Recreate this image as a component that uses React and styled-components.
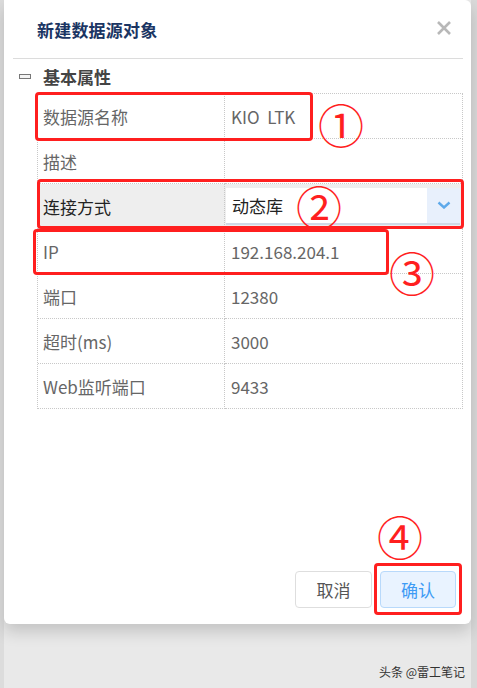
import styled, { createGlobalStyle } from "styled-components";

const GlobalStyle = createGlobalStyle`
  html, body {
    margin: 0;
    padding: 0;
    background: #e8e8e8;
  }
  * {
    box-sizing: border-box;
  }
`;

const Page = styled.div`
  position: relative;
  width: 477px;
  height: 688px;
  overflow: hidden;
  background: linear-gradient(to right, #dcdcdc 0, #dcdcdc 4px, #e9e9e9 4px, #e9e9e9 471px, #d9d9d9 471px);
  font-family: "Noto Sans CJK SC", "Noto Sans", sans-serif;
`;

const Dialog = styled.div`
  margin-left: 4px;
  width: 467px;
  height: 624px;
  background: #fff;
  border-radius: 0 6px 6px 6px;
  box-shadow: 0 8px 16px rgba(0, 0, 0, 0.16);
  display: flex;
  flex-direction: column;
`;

const Header = styled.div`
  height: 59px;
  margin: 0 8px 0 9px;
  padding: 0 11px 0 24px;
  border-bottom: 1px solid #dcdcdc;
  display: flex;
  align-items: center;
  justify-content: space-between;
`;

const Title = styled.h2`
  margin: 0;
  font-size: 17px;
  font-weight: 700;
  color: #1b3563;
  letter-spacing: 0.2px;
`;

const Close = styled.svg`
  width: 16px;
  height: 16px;
  margin-top: -2px;
`;

const Section = styled.div`
  height: 34px;
  padding-left: 15px;
  display: flex;
  align-items: center;
  gap: 12px;
`;

const Collapse = styled.span`
  width: 12px;
  height: 5px;
  border: 1px solid #777;
  background: #f4f4f4;
`;

const SectionTitle = styled.span`
  font-size: 17px;
  font-weight: 700;
  color: #444;
`;

const Table = styled.div`
  margin-left: 33px;
  width: 426px;
  border-top: 1px dotted #c8c8c8;
  border-left: 1px dotted #c8c8c8;
`;

const Row = styled.div`
  display: grid;
  grid-template-columns: 187px 1fr;
  height: 45px;
  background: ${(p) => (p.$active ? "#eeeeee" : "#fff")};
`;

const Cell = styled.div`
  border-right: 1px dotted #c8c8c8;
  border-bottom: 1px dotted #c8c8c8;
  display: flex;
  align-items: center;
  padding-left: ${(p) => (p.$value ? "6px" : "5px")};
  font-size: 17px;
  white-space: pre;
  color: ${(p) => (p.$dark ? "#222" : "#666")};
`;

const Select = styled.div`
  flex: 1;
  height: 37px;
  margin: 0 2px 0 -5px;
  display: flex;
  border-bottom: 2px solid #cfd9e6;
  background: #fff;
`;

const SelectText = styled.div`
  flex: 1;
  display: flex;
  align-items: center;
  padding-left: 6px;
  font-size: 17px;
  color: #222;
`;

const SelectButton = styled.div`
  width: 33px;
  background: #e8f0fc;
  display: flex;
  align-items: center;
  justify-content: center;
`;

const Footer = styled.div`
  margin-top: auto;
  padding: 0 15px 16px 0;
  display: flex;
  justify-content: flex-end;
  gap: 8px;
`;

const Button = styled.button`
  width: ${(p) => (p.$primary ? "76px" : "77px")};
  height: 37px;
  border-radius: 4px;
  border: 1px solid ${(p) => (p.$primary ? "#b8d9fb" : "#dedede")};
  background: ${(p) => (p.$primary ? "#e9f3ff" : "#fff")};
  color: ${(p) => (p.$primary ? "#3d9bf5" : "#555")};
  font-family: inherit;
  font-size: 17px;
  padding: 0;
`;

const Mark = styled.div`
  position: absolute;
  border: 3px solid #ff1f1f;
  border-radius: 4px;
  pointer-events: none;
`;

const Num = styled.div`
  position: absolute;
  color: #ff1f1f;
  font-family: "Noto Sans CJK SC", sans-serif;
  font-size: 46px;
  line-height: 46px;
`;

const Watermark = styled.div`
  position: absolute;
  right: 12px;
  bottom: 8px;
  font-size: 12px;
  color: #333;
`;

const rows = [
  ["数据源名称", "KIO  LTK"],
  ["描述", ""],
  ["连接方式", null],
  ["IP", "192.168.204.1"],
  ["端口", "12380"],
  ["超时(ms)", "3000"],
  ["Web监听端口", "9433"],
];

export default function App() {
  return (
    <Page>
      <GlobalStyle />
      <Dialog>
        <Header>
          <Title>新建数据源对象</Title>
          <Close viewBox="0 0 16 16">
            <path d="M2 2 L14 14 M14 2 L2 14" stroke="#b8b8b8" strokeWidth="2.6" />
          </Close>
        </Header>
        <Section>
          <Collapse />
          <SectionTitle>基本属性</SectionTitle>
        </Section>
        <Table>
          {rows.map(([label, value]) => (
            <Row key={label} $active={value === null}>
              <Cell $dark={value === null}>{label}</Cell>
              {value === null ? (
                <Cell $value>
                  <Select>
                    <SelectText>动态库</SelectText>
                    <SelectButton>
                      <svg width="14" height="8" viewBox="0 0 14 8">
                        <path d="M1.5 1.5 L7 6.5 L12.5 1.5" fill="none" stroke="#5ea9ea" strokeWidth="2.4" />
                      </svg>
                    </SelectButton>
                  </Select>
                </Cell>
              ) : (
                <Cell $value>{value}</Cell>
              )}
            </Row>
          ))}
        </Table>
        <Footer>
          <Button>取消</Button>
          <Button $primary>确认</Button>
        </Footer>
      </Dialog>

      <Mark style={{ left: 35, top: 92, width: 278, height: 49 }} />
      <Num style={{ left: 318, top: 100 }}>①</Num>
      <Mark style={{ left: 37, top: 179, width: 427, height: 50 }} />
      <Num style={{ left: 296, top: 182 }}>②</Num>
      <Mark style={{ left: 33, top: 229, width: 356, height: 46 }} />
      <Num style={{ left: 389, top: 248 }}>③</Num>
      <Num style={{ left: 377, top: 512 }}>④</Num>
      <Mark style={{ left: 374, top: 563, width: 88, height: 52 }} />

      <Watermark>头条 @雷工笔记</Watermark>
    </Page>
  );
}
